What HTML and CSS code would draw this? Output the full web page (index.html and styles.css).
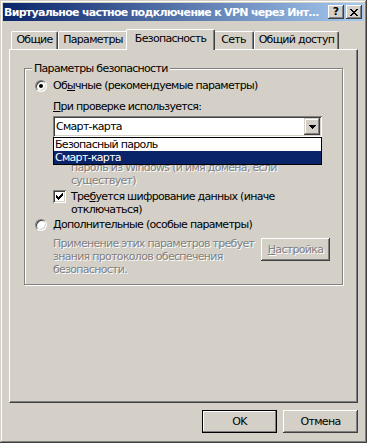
FILE: index.html
```html
<!DOCTYPE html>
<html lang="ru">
<head>
    <meta charset="UTF-8">
    <title>Свойства VPN</title>
    <link rel="stylesheet" href="styles.css">
</head>
<body>

<div class="window">
    <!--Title bar-->
    <div class="titlebar">
        <span class="title">Виртуальное частное подключение к VPN через Инт...</span>
        <div class="title-buttons">
            <div class="tbtn help">?</div>
            <div class="tbtn">
                <svg width="8" height="7" viewBox="0 0 8 7" shape-rendering="crispEdges">
                    <path fill="#000" d="M0 0h2v1h-2z M6 0h2v1h-2z M1 1h2v1h-2z M5 1h2v1h-2z M2 2h4v1h-4z M3 3h2v1h-2z M2 4h4v1h-4z M1 5h2v1h-2z M5 5h2v1h-2z M0 6h2v1h-2z M6 6h2v1h-2z"/>
                </svg>
            </div>
        </div>
    </div>

    <div class="content">
        <!--Tabs-->
        <div class="tabs">
            <div class="tab">Общие</div>
            <div class="tab">Параметры</div>
            <div class="tab active">Безопасность</div>
            <div class="tab">Сеть</div>
            <div class="tab">Общий доступ</div>
        </div>

        <!--Tab page-->
        <div class="panel">
            <fieldset class="group">
                <legend>Параметры безопасности</legend>

                <div class="option">
                    <span class="radio checked"></span>
                    <span>Об<u>ы</u>чные (рекомендуемые параметры)</span>
                </div>

                <div class="sub">
                    <div class="caption"><u>П</u>ри проверке используется:</div>

                    <div class="combo-wrap">
                        <div class="combo">
                            <span class="combo-text">Смарт-карта</span>
                            <span class="combo-btn">
                                <svg width="7" height="4" viewBox="0 0 7 4" shape-rendering="crispEdges">
                                    <path fill="#000" d="M0 0h7v1h-1v1h-1v1h-1v1h-1v-1h-1v-1h-1v-1h-1z"/>
                                </svg>
                            </span>
                        </div>
                        <!--Open dropdown list-->
                        <ul class="dropdown">
                            <li>Безопасный пароль</li>
                            <li class="selected">Смарт-карта</li>
                        </ul>
                    </div>

                    <div class="check disabled">
                        <span class="box"></span>
                        <span>Автоматически использовать имя входа и<br>пароль из Windows (и имя домена, если<br>существует)</span>
                    </div>

                    <div class="check">
                        <span class="box">
                            <svg width="7" height="7" viewBox="0 0 7 7" shape-rendering="crispEdges">
                                <path fill="#000" d="M0 2h1v1h1v1h1v-1h1v-1h1v-1h1v-1h1v3h-1v1h-1v1h-1v1h-1v1h-1v-1h-1v-1h-1z"/>
                            </svg>
                        </span>
                        <span>Тре<u>б</u>уется шифрование данных (иначе<br>отключаться)</span>
                    </div>
                </div>

                <div class="option second">
                    <span class="radio"></span>
                    <span><u>Д</u>ополнительные (особые параметры)</span>
                </div>

                <div class="advanced">
                    <p class="note disabled">Применение этих параметров требует<br>знания протоколов обеспечения<br>безопасности.</p>
                    <button class="btn" disabled><u>Н</u>астройка</button>
                </div>
            </fieldset>
        </div>

        <!--Dialog buttons-->
        <div class="footer">
            <button class="btn default">OK</button>
            <button class="btn">Отмена</button>
        </div>
    </div>
</div>

</body>
</html>
```

FILE: styles.css
```css
/* Classic grey dialog */
* {
    box-sizing: border-box;
}

body {
    margin: 0;
    background-color: #d4d0c8;
    font-family: "DejaVu Sans", sans-serif;
    font-size: 11px;
    letter-spacing: -0.7px;
    color: #000;
}

/* Window frame */
.window {
    width: 367px;
    height: 443px;
    padding: 3px;
    background-color: #d4d0c8;
    display: flex;
    flex-direction: column;
    box-shadow: inset -1px -1px #404040, inset 1px 1px #d4d0c8,
                inset -2px -2px #808080, inset 2px 2px #fff;
}

/* Title bar */
.titlebar {
    height: 18px;
    display: flex;
    align-items: center;
    padding: 0 2px 0 1px;
    background: linear-gradient(to right, #0a246a, #a6caf0);
    color: #fff;
}

.title {
    flex: 1;
    font-weight: bold;
    white-space: nowrap;
    overflow: hidden;
    letter-spacing: -0.7px;
}

.title-buttons {
    display: flex;
    gap: 2px;
}

.tbtn {
    width: 16px;
    height: 14px;
    display: flex;
    align-items: center;
    justify-content: center;
    background-color: #d4d0c8;
    color: #000;
    box-shadow: inset -1px -1px #404040, inset 1px 1px #fff,
                inset -2px -2px #808080, inset 2px 2px #d4d0c8;
}

.tbtn.help {
    font-weight: bold;
    font-size: 11px;
    line-height: 14px;
    letter-spacing: 0;
    padding-bottom: 1px;
}

/* Dialog body */
.content {
    flex: 1;
    margin-top: 1px;
    padding: 7px 6px 7px 6px;
    display: flex;
    flex-direction: column;
}

/* Tabs */
.tabs {
    height: 20px;
    display: flex;
    align-items: flex-end;
    padding-left: 2px;
    position: relative;
    z-index: 1;
}

.tab {
    height: 18px;
    line-height: 16px;
    text-align: center;
    white-space: nowrap;
    background-color: #d4d0c8;
    border-top: 1px solid #fff;
    border-left: 1px solid #fff;
    border-right: 1px solid #404040;
    border-radius: 2px 2px 0 0;
    box-shadow: inset -1px 0 #808080;
}

.tab:nth-child(1) { width: 47px; }
.tab:nth-child(2) { width: 70px; }
.tab:nth-child(3) { width: 85px; }
.tab:nth-child(4) { width: 41px; }
.tab:nth-child(5) { width: 85px; }

.tab.active {
    width: 89px;
    height: 21px;
    margin: 0 -2px -1px -2px;
    line-height: 17px;
    position: relative;
    z-index: 2;
}

/* Tab page */
.panel {
    height: 354px;
    padding: 12px 0 0 14px;
    border-top: 1px solid #fff;
    border-left: 1px solid #fff;
    border-right: 1px solid #404040;
    border-bottom: 1px solid #404040;
    box-shadow: inset -1px -1px #808080;
}

/* Group box */
.group {
    width: 319px;
    margin: 0;
    padding: 4px 8px 8px 10px;
    border: 1px solid #808080;
    box-shadow: 1px 1px 0 #fff, inset 1px 1px 0 #fff;
}

.group legend {
    margin-left: -3px;
    padding: 0 2px;
    line-height: 13px;
    background-color: #d4d0c8;
}

.option {
    height: 13px;
    display: flex;
    align-items: center;
    gap: 6px;
    white-space: nowrap;
}

.option.second {
    margin-top: 2px;
}

/* Radio button */
.radio {
    width: 12px;
    height: 12px;
    flex: none;
    border-radius: 50%;
    background-color: #fff;
    border: 1px solid;
    border-color: #808080 #fff #fff #808080;
    box-shadow: inset 1px 1px #404040, inset -1px -1px #d4d0c8;
    display: flex;
    align-items: center;
    justify-content: center;
}

.radio.checked::after {
    content: "";
    width: 4px;
    height: 4px;
    border-radius: 50%;
    background-color: #000;
}

.sub {
    margin-left: 18px;
}

.caption {
    margin-top: 8px;
    line-height: 13px;
}

/* Combo box */
.combo-wrap {
    position: relative;
    width: 269px;
    margin-top: 3px;
}

.combo {
    height: 21px;
    display: flex;
    align-items: center;
    padding: 2px;
    background-color: #fff;
    box-shadow: inset 1px 1px #808080, inset -1px -1px #fff,
                inset 2px 2px #404040, inset -2px -2px #d4d0c8;
}

.combo-text {
    flex: 1;
    padding-left: 1px;
}

.combo-btn {
    width: 16px;
    height: 17px;
    display: flex;
    align-items: center;
    justify-content: center;
    background-color: #d4d0c8;
    box-shadow: inset -1px -1px #404040, inset 1px 1px #d4d0c8,
                inset -2px -2px #808080, inset 2px 2px #fff;
}

.dropdown {
    position: absolute;
    top: 100%;
    left: 0;
    width: 269px;
    margin: 0;
    padding: 0;
    list-style: none;
    background-color: #fff;
    border: 1px solid #000;
    z-index: 3;
}

.dropdown li {
    height: 13px;
    line-height: 13px;
    padding-left: 1px;
}

.dropdown li.selected {
    background-color: #0a246a;
    color: #fff;
}

/* Check boxes */
.check {
    display: flex;
    align-items: flex-start;
    gap: 5px;
    line-height: 13px;
    white-space: nowrap;
    margin-top: 3px;
}

.check.disabled {
    margin-top: 11px;
}

.box {
    width: 13px;
    height: 13px;
    flex: none;
    display: flex;
    align-items: center;
    justify-content: center;
    background-color: #fff;
    box-shadow: inset 1px 1px #808080, inset -1px -1px #fff,
                inset 2px 2px #404040, inset -2px -2px #d4d0c8;
}

.check.disabled .box {
    background-color: #d4d0c8;
}

.disabled {
    color: #808080;
    text-shadow: 1px 1px 0 #fff;
}

/* Advanced settings */
.advanced {
    display: flex;
    align-items: flex-start;
    margin: 6px 0 0 18px;
}

.note {
    width: 205px;
    margin: 0;
    line-height: 13px;
    white-space: nowrap;
}

.advanced .btn {
    width: 69px;
    margin: 1px 0 0 3px;
}

/* Push buttons */
.btn {
    width: 75px;
    height: 23px;
    padding: 0;
    border: none;
    font-family: inherit;
    font-size: 11px;
    letter-spacing: inherit;
    color: #000;
    background-color: #d4d0c8;
    box-shadow: inset -1px -1px #404040, inset 1px 1px #fff,
                inset -2px -2px #808080, inset 2px 2px #d4d0c8;
}

.btn:disabled {
    color: #808080;
    text-shadow: 1px 1px 0 #fff;
}

.btn.default {
    border: 1px solid #000;
    box-shadow: inset -1px -1px #808080, inset 1px 1px #fff;
}

.footer {
    display: flex;
    justify-content: flex-end;
    gap: 6px;
    margin-top: 7px;
}
```
